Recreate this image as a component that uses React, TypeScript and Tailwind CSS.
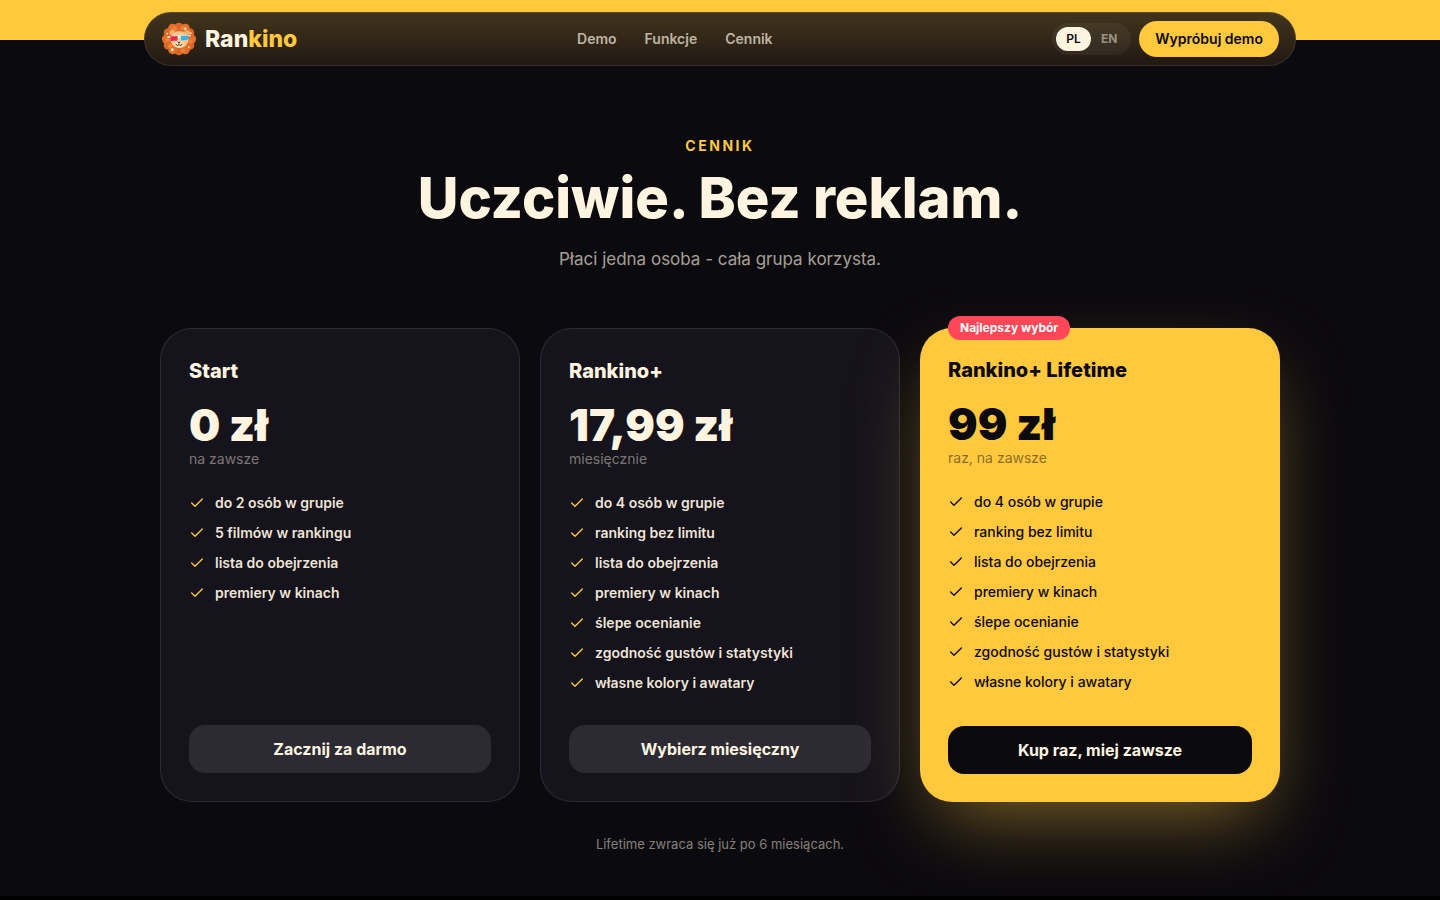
import { Check } from "lucide-react";
import clsx from "clsx";

type Plan = {
  name: string;
  price: string;
  period: string;
  features: string[];
  cta: string;
  badge?: string;
};

const NAV_LINKS = [
  { href: "#demo", label: "Demo" },
  { href: "#funkcje", label: "Funkcje" },
  { href: "#cennik", label: "Cennik" },
];

const FULL_FEATURES = [
  "do 4 osób w grupie",
  "ranking bez limitu",
  "lista do obejrzenia",
  "premiery w kinach",
  "ślepe ocenianie",
  "zgodność gustów i statystyki",
  "własne kolory i awatary",
];

const PLANS: Plan[] = [
  {
    name: "Start",
    price: "0 zł",
    period: "na zawsze",
    features: ["do 2 osób w grupie", "5 filmów w rankingu", "lista do obejrzenia", "premiery w kinach"],
    cta: "Zacznij za darmo",
  },
  {
    name: "Rankino+",
    price: "17,99 zł",
    period: "miesięcznie",
    features: FULL_FEATURES,
    cta: "Wybierz miesięczny",
  },
  {
    name: "Rankino+ Lifetime",
    price: "99 zł",
    period: "raz, na zawsze",
    features: FULL_FEATURES,
    cta: "Kup raz, miej zawsze",
    badge: "Najlepszy wybór",
  },
];

export default function App() {
  return (
    <div className="min-h-screen overflow-hidden bg-[#0b0a0f] font-['Inter',sans-serif] text-[#fff4e0]">
      <Header />
      <main>
        <section id="cennik" className="mx-auto max-w-[1160px] px-5 pt-[70px] pb-[42px] text-center">
          <p className="text-sm leading-5 font-bold tracking-[0.18em] text-[#ffc83d]">CENNIK</p>
          <h1 className="mt-3 text-[56px] leading-[60px] font-extrabold">Uczciwie. Bez reklam.</h1>
          <p className="mt-4 text-[17px] leading-[30px] text-[#fff4e0]/65">
            Płaci jedna osoba - cała grupa korzysta.
          </p>
          <div className="mt-[54px] grid gap-5 text-left md:grid-cols-3">
            {PLANS.map((p) => (
              <PlanCard key={p.name} plan={p} />
            ))}
          </div>
          <p className="relative mt-8 text-[13px] leading-5 text-[#fff4e0]/50">
            Lifetime zwraca się już po 6 miesiącach.
          </p>
        </section>
        <div className="h-1 bg-black" />
      </main>
    </div>
  );
}

function Header() {
  return (
    <header className="bg-[linear-gradient(#ffc83d_40px,#0b0a0f_40px)] pt-3">
      <nav className="mx-auto flex h-[54px] max-w-6xl items-center justify-between rounded-full border border-white/10 bg-linear-to-b from-[#44351b] to-[#201913] bg-origin-border px-4">
        <a href="#" className="flex items-center gap-2 text-[23px] font-extrabold">
          <LionLogo />
          <span>
            Ran<span className="text-[#ffc83d]">kino</span>
          </span>
        </a>
        <div className="flex gap-7 text-sm font-semibold text-[#fff4e0]/70">
          {NAV_LINKS.map((l) => (
            <a key={l.href} href={l.href}>
              {l.label}
            </a>
          ))}
        </div>
        <div className="flex items-center gap-2">
          <div className="flex rounded-full bg-white/5 p-1 text-xs leading-4 font-bold">
            <button className="rounded-full bg-[#fff4e0] px-[10px] py-1 font-semibold text-[#0b0a0f]">PL</button>
            <button className="rounded-full px-[10px] py-1 text-[#fff4e0]/50">EN</button>
          </div>
          <a
            href="#demo"
            className="flex h-9 items-center rounded-full bg-[#ffc83d] px-4 text-sm font-semibold text-[#0b0a0f]"
          >
            Wypróbuj demo
          </a>
        </div>
      </nav>
    </header>
  );
}

function PlanCard({ plan }: { plan: Plan }) {
  const best = !!plan.badge;
  return (
    <article
      className={clsx(
        "relative flex min-h-[474px] flex-col rounded-[32px] p-7",
        best
          ? "bg-[#ffc83d] text-[#0b0a0f] shadow-[0_30px_80px_-20px_rgba(255,200,61,0.5)]"
          : "border border-white/10 bg-[#15131c]",
      )}
    >
      {plan.badge && (
        <span className="absolute -top-3 left-7 rounded-full bg-[#ff4757] px-3 py-1 text-xs leading-4 font-bold text-white">
          {plan.badge}
        </span>
      )}
      <h2 className="text-xl leading-7 font-extrabold">{plan.name}</h2>
      <div className="mt-4 text-[44px] leading-[48px] font-black">{plan.price}</div>
      <div className={clsx("text-sm leading-5", best ? "text-[#0b0a0f]/50" : "text-[#fff4e0]/45")}>
        {plan.period}
      </div>
      <ul
        className={clsx(
          "mt-6 flex flex-col gap-[10px] text-sm leading-5",
          best ? "font-medium" : "font-semibold text-[#fff4e0]/95",
        )}
      >
        {plan.features.map((f) => (
          <li key={f} className="flex items-center gap-[10px]">
            <Check className={clsx("size-4", !best && "text-[#ffc83d]")} strokeWidth={2} />
            {f}
          </li>
        ))}
      </ul>
      <button
        className={clsx(
          "mt-auto h-12 w-full rounded-2xl font-bold text-[#fff4e0]",
          best ? "bg-[#0b0a0f]" : "bg-white/10",
        )}
      >
        {plan.cta}
      </button>
    </article>
  );
}

// Outer curls of the mane
const CURLS = [
  [20, 7], [27, 8], [32, 13], [34, 20], [32, 27], [27, 32],
  [20, 33], [13, 32], [8, 27], [6, 20], [8, 13], [13, 8],
];

function LionLogo() {
  return (
    <svg viewBox="0 0 40 40" className="size-9" aria-hidden="true">
      <circle cx="20" cy="20" r="16" fill="#dd6826" />
      {CURLS.map(([x, y], i) => (
        <circle key={i} cx={x} cy={y} r="5" fill={i % 2 ? "#e2702b" : "#dc6624"} />
      ))}
      <circle cx="15" cy="9" r="3" fill="#ea8339" />
      <circle cx="24" cy="8" r="2.5" fill="#ea8339" />
      <circle cx="7" cy="21" r="2.4" fill="#ea8339" />
      <circle cx="33" cy="23" r="2.4" fill="#ea8339" />
      <circle cx="10" cy="28" r="2.4" fill="#ea8339" />
      <circle cx="24" cy="33" r="2.4" fill="#ea8339" />
      <circle cx="12.5" cy="13" r="3" fill="#f6b06c" />
      <circle cx="29" cy="13" r="3" fill="#f6b06c" />
      <ellipse cx="20.5" cy="20.5" rx="10" ry="9.5" fill="#f9c58d" />
      <ellipse cx="20" cy="25.5" rx="5.5" ry="4.2" fill="#ffe0b8" />
      <path d="M7 17 L20 16 L33 15.5 V17 L20 19 L7 18.5Z" fill="#f6f1ea" />
      <path d="M10 17 L18.8 17 L18.3 21.8 L11.2 22.2Z" fill="#e5294d" />
      <path d="M21.5 16.8 L31 16.2 L29.7 20.8 L22.3 21.6Z" fill="#30b6e6" />
      <path d="M18.8 17 H21.5 L22.2 21 L21 19 H19.4 L18.4 21Z" fill="#f6f1ea" />
      <path d="M18.2 23 H21.8 L20 25.2Z" fill="#4a2213" />
      <path
        d="M16.5 26 Q18.7 28.4 20 26.2 Q21.3 28.4 23.5 26"
        fill="none"
        stroke="#4a2213"
        strokeWidth="1.1"
        strokeLinecap="round"
      />
      <g fill="#fff3d6">
        <circle cx="27" cy="8.5" r="1.3" />
        <circle cx="33" cy="13.5" r="1" />
        <circle cx="7" cy="14" r="1" />
        <circle cx="12.5" cy="32" r="1.6" />
        <circle cx="31" cy="29" r="1" />
      </g>
    </svg>
  );
}
